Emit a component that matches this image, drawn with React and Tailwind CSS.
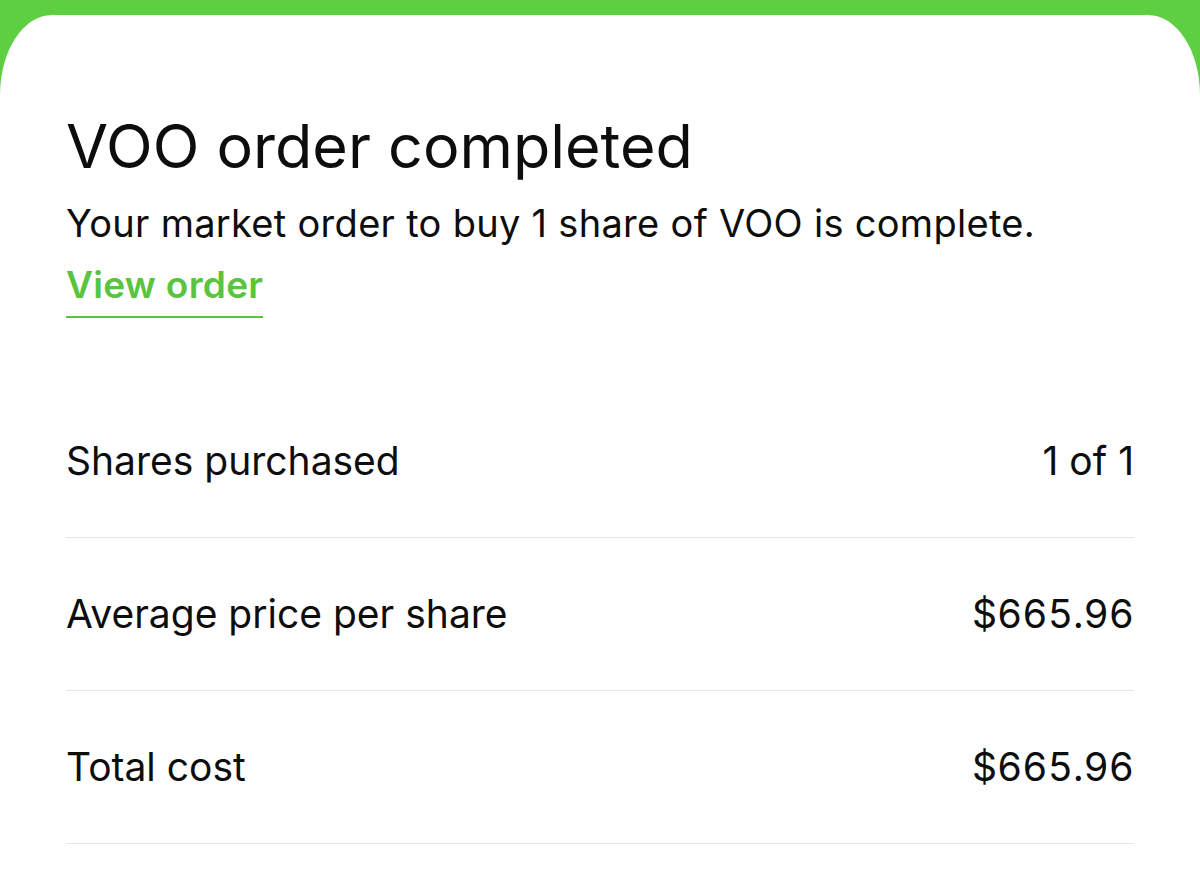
export default function App() {
  const rows = [
    ["Shares purchased", "1 of 1", false],
    ["Average price per share", "$665.96", true],
    ["Total cost", "$665.96", true],
  ];
  return (
    <div
      className="w-[1200px] h-[880px] overflow-hidden bg-[#5ecf43] pt-[15px] text-[#0d0d0d]"
      style={{ fontFamily: "Inter, 'Noto Sans', sans-serif" }}
    >
      <div className="h-full bg-white rounded-tl-[52px_80px] rounded-tr-[52px_80px] px-[66px] pt-[95px]">
        <h1 className="text-[61px] leading-[72px] font-normal">VOO order completed</h1>
        <p className="mt-[19px] text-[38px] leading-[44px] tracking-[0.3px]">
          Your market order to buy 1 share of VOO is complete.
        </p>
        <div className="mt-[18px]">
          <span className="inline-block text-[37px] leading-[44px] font-semibold tracking-[0.3px] text-[#5bc43f] border-b-2 border-[#5bc43f] pb-[9px]">
            View order
          </span>
        </div>
        <div className="mt-[67px]">
          {rows.map(([k, v, tab]) => (
            <div
              key={k}
              className="flex items-center justify-between h-[153px] border-b border-[#e6e6e6] text-[39px]"
            >
              <span>{k}</span>
              <span className={tab ? "tabular-nums" : ""}>{v}</span>
            </div>
          ))}
        </div>
      </div>
    </div>
  );
}
